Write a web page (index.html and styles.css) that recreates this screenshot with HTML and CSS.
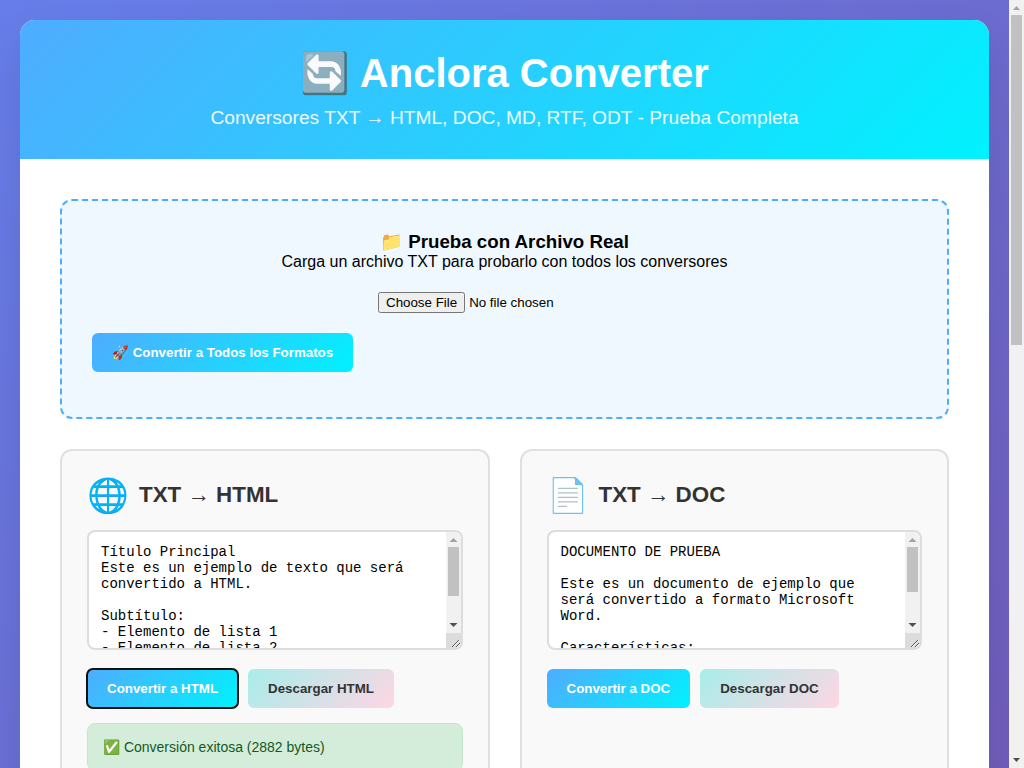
FILE: index.html
```html
<!DOCTYPE html>
<html lang="es">
<head>
<meta charset="UTF-8">
<title>Anclora Converter</title>
<link rel="stylesheet" href="styles.css">
</head>
<body>
<div class="window">
<div class="page">
<div class="container">
  <header class="header">
    <h1>🔄 Anclora Converter</h1>
    <p>Conversores TXT → HTML, DOC, MD, RTF, ODT - Prueba Completa</p>
  </header>
  <main class="content">
    <section class="file-upload">
      <h3>📁 Prueba con Archivo Real</h3>
      <p>Carga un archivo TXT para probarlo con todos los conversores</p>
      <input type="file" class="file-input" accept=".txt">
      <div class="controls"><button class="btn">🚀 Convertir a Todos los Formatos</button></div>
    </section>
    <div class="grid">
      <section class="card">
        <div class="card-head"><span class="icon">🌐</span><span class="title">TXT → HTML</span></div>
        <div class="field">
          <textarea class="input">Título Principal
Este es un ejemplo de texto que será convertido a HTML.

Subtítulo:
- Elemento de lista 1
- Elemento de lista 2</textarea>
          <div class="bar">
            <svg class="arrow" viewBox="0 0 15 15"><path d="M3.500 10h8L7.500 6z" fill="#a3a3a3"/></svg>
            <div class="track"><div class="thumb thumb-html"></div></div>
            <svg class="arrow" viewBox="0 0 15 15"><path d="M3.500 5h8L7.500 9z" fill="#505050"/></svg>
            <svg class="corner" viewBox="0 0 15 15"><path d="M7 14l7-7M11 14l3-3" stroke="#fff" fill="none"/><path d="M6 14l7-7M10 14l4-4" stroke="#555" fill="none"/></svg>
          </div>
        </div>
        <div class="controls"><button class="btn focused">Convertir a HTML</button><button class="btn secondary">Descargar HTML</button></div>
        <div class="result">✅ Conversión exitosa (2882 bytes)</div>
      </section>
      <section class="card">
        <div class="card-head"><span class="icon">📄</span><span class="title">TXT → DOC</span></div>
        <div class="field">
          <textarea class="input">DOCUMENTO DE PRUEBA

Este es un documento de ejemplo que será convertido a formato Microsoft Word.

Características:</textarea>
          <div class="bar">
            <svg class="arrow" viewBox="0 0 15 15"><path d="M3.500 10h8L7.500 6z" fill="#a3a3a3"/></svg>
            <div class="track"><div class="thumb thumb-doc"></div></div>
            <svg class="arrow" viewBox="0 0 15 15"><path d="M3.500 5h8L7.500 9z" fill="#505050"/></svg>
            <svg class="corner" viewBox="0 0 15 15"><path d="M7 14l7-7M11 14l3-3" stroke="#fff" fill="none"/><path d="M6 14l7-7M10 14l4-4" stroke="#555" fill="none"/></svg>
          </div>
        </div>
        <div class="controls"><button class="btn">Convertir a DOC</button><button class="btn secondary">Descargar DOC</button></div>
      </section>
    </div>
  </main>
</div>
</div>
<div class="bar page-bar">
  <svg class="arrow" viewBox="0 0 15 15"><path d="M4 10h7L7.500 6z" fill="#a3a3a3"/></svg>
  <div class="track"><div class="thumb thumb-page"></div></div>
  <svg class="arrow" viewBox="0 0 15 15"><path d="M4 5h7L7.500 9z" fill="#505050"/></svg>
</div>
</div>
</body>
</html>
```
FILE: styles.css
```css
* { margin: 0; padding: 0; box-sizing: border-box; }
body { font-family: "Liberation Sans", Arial, sans-serif; overflow: hidden; }
.window {
  display: flex;
  align-items: flex-start;
  height: 100vh;
  overflow: hidden;
}
.page {
  flex: 1;
  min-width: 0;
  height: 1712px;
  padding: 20px;
  background: linear-gradient(135deg, #667eea 0%, #764ba2 100%);
}
.container {
  max-width: 1400px;
  height: 100%;
  margin: 0 auto;
  background: #fff;
  border-radius: 15px;
  overflow: hidden;
  box-shadow: 0 20px 40px rgba(0,0,0,.1);
}
.header {
  background: linear-gradient(135deg, #4facfe 0%, #00f2fe 100%);
  color: #fff;
  padding: 30px;
  text-align: center;
}
.header h1 { font-size: 2.5em; margin-bottom: 10px; }
.header p { font-size: 1.2em; opacity: .9; }
.content { padding: 40px; }
.file-upload {
  background: #f0f8ff;
  border: 2px dashed #4facfe;
  border-radius: 12px;
  padding: 30px;
  text-align: center;
  margin-bottom: 30px;
}
.file-input { margin: 20.5px 0 20px; }
.controls { display: flex; gap: 10px; margin-bottom: 15px; }
.btn {
  background: linear-gradient(135deg, #4facfe 0%, #00f2fe 100%);
  color: #fff;
  border: none;
  padding: 12px 20px;
  border-radius: 6px;
  font-weight: 600;
  font-family: inherit;
}
.btn.secondary { background: linear-gradient(135deg, #a8edea 0%, #fed6e3 100%); color: #333; }
.btn.focused { outline: 2px solid #101010; outline-offset: -1px; }
.grid { display: grid; grid-template-columns: 1fr 1fr; gap: 30px; }
.card { background: #f9f9f9; border: 2px solid #e0e0e0; border-radius: 12px; padding: 25px; }
.card-head { display: flex; align-items: center; margin-bottom: 15px; font-size: 1.4em; }
.icon { font-size: 1.5em; margin-right: 10px; }
.title { font-weight: bold; color: #333; }
.field {
  display: flex;
  height: 120px;
  border: 2px solid #ddd;
  border-radius: 8px;
  background: #fff;
  overflow: hidden;
  margin-bottom: 19px;
}
.input {
  flex: 1;
  min-width: 0;
  border: none;
  outline: none;
  padding: 12px;
  background: transparent;
  font-family: "Liberation Mono", "Courier New", monospace;
  font-size: 14px;
  resize: none;
  overflow: hidden;
}
.bar { display: flex; flex-direction: column; flex: none; width: 15px; background: #f1f1f1; }
.page-bar { height: 100%; }
.arrow, .corner { display: block; flex: none; width: 15px; height: 15px; }
.corner { background: #dcdcdc; }
.track { flex: 1; padding: 0 2px; }
.thumb { background: #c1c1c1; }
.thumb-html { height: 49px; }
.thumb-doc { height: 45px; }
.thumb-page { height: 330px; }
.result {
  background: #d4edda;
  border: 1px solid #c3e6cb;
  color: #155724;
  border-radius: 8px;
  padding: 15px;
  font-size: 14px;
}
```
